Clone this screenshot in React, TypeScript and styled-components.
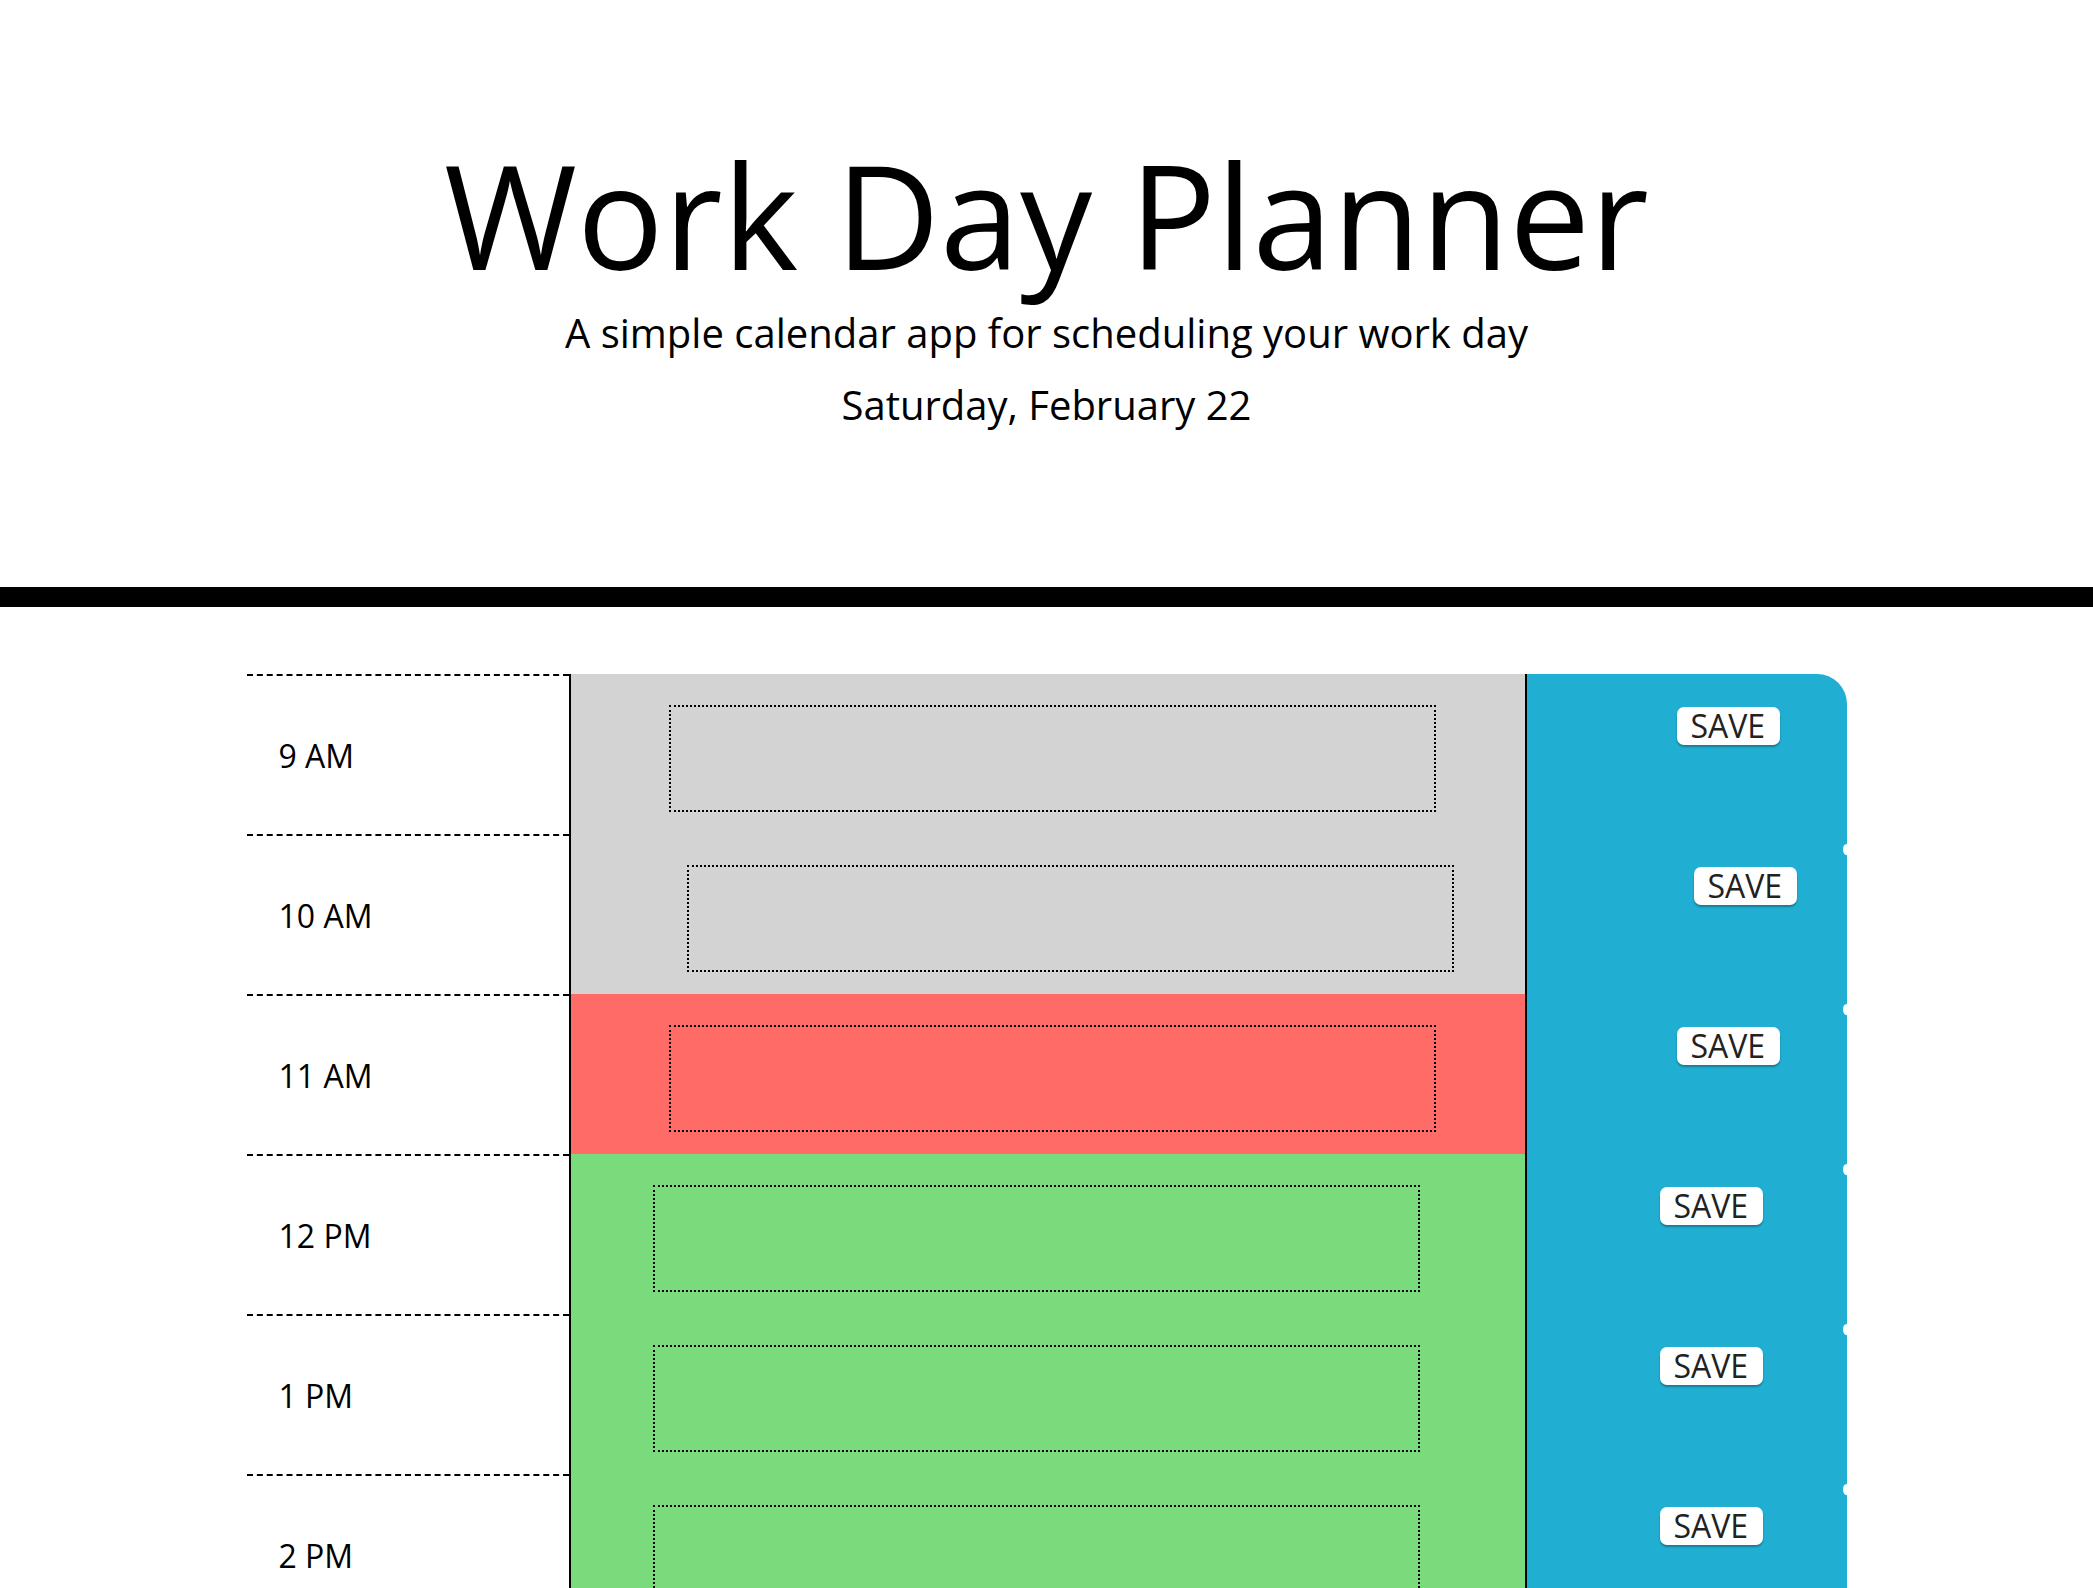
import React from "react";
import styled, { createGlobalStyle } from "styled-components";

type Tense = "past" | "present" | "future";

interface HourBlock {
  label: string;
  tense: Tense;
  areaShift: number;
  saveShift: number;
}

const HOURS: HourBlock[] = [
  { label: "9 AM", tense: "past", areaShift: 0, saveShift: 0 },
  { label: "10 AM", tense: "past", areaShift: 18, saveShift: 17 },
  { label: "11 AM", tense: "present", areaShift: 0, saveShift: 0 },
  { label: "12 PM", tense: "future", areaShift: -16, saveShift: -17 },
  { label: "1 PM", tense: "future", areaShift: -16, saveShift: -17 },
  { label: "2 PM", tense: "future", areaShift: -16, saveShift: -17 },
  { label: "3 PM", tense: "future", areaShift: -16, saveShift: -17 },
  { label: "4 PM", tense: "future", areaShift: -16, saveShift: -17 },
  { label: "5 PM", tense: "future", areaShift: -16, saveShift: -17 },
];

const TENSE_COLORS: Record<Tense, string> = {
  past: "#d3d3d3",
  present: "#ff6b66",
  future: "#7adb7c",
};

const GlobalStyle = createGlobalStyle`
  body {
    margin: 0;
    background: #ffffff;
    color: #000000;
    font-family: "Open Sans", "Noto Sans", sans-serif;
    line-height: 1;
  }
`;

const Header = styled.header`
  text-align: center;
  padding: 128px 64px 0;
  height: 459px;
  border-bottom: 20px solid #000000;
  margin-bottom: 67px;
`;

const Title = styled.h1`
  margin: 0 0 12px;
  font-size: 144px;
  font-weight: 400;
  line-height: 1.2;
`;

const Lead = styled.p`
  margin: 0 0 32px;
  font-size: 40px;
  line-height: 1;
`;

const Schedule = styled.main`
  width: 1600px;
  margin: 0 auto;
`;

const Row = styled.section`
  display: grid;
  grid-template-columns: 322px 958px 320px;
  height: 160px;
`;

const HourCell = styled.div`
  border-top: 2px dashed #000000;
  padding: 64px 0 0 32px;
  font-size: 32px;
`;

const Description = styled.div<{ $tense: Tense }>`
  background: ${(p) => TENSE_COLORS[p.$tense]};
  border-left: 2px solid #000000;
  border-right: 2px solid #000000;
  padding-top: 31px;
`;

const NoteArea = styled.textarea<{ $shift: number }>`
  display: block;
  box-sizing: border-box;
  width: 767px;
  height: 107px;
  margin-left: ${(p) => 98 + p.$shift}px;
  padding: 10px;
  background: transparent;
  border: 2px dotted #000000;
  resize: none;
  font-family: inherit;
  font-size: 32px;
  color: #000000;
  outline: none;
`;

const SaveCell = styled.div<{ $first: boolean }>`
  position: relative;
  background: #20afd3;
  border-top-right-radius: ${(p) => (p.$first ? "30px" : "0")};
  padding-top: 33px;

  &::before {
    content: "";
    display: ${(p) => (p.$first ? "none" : "block")};
    position: absolute;
    right: -3px;
    top: 10px;
    width: 7px;
    height: 11px;
    border-radius: 50%;
    background: #ffffff;
  }
`;

const SaveButton = styled.button<{ $shift: number }>`
  display: block;
  margin-left: ${(p) => 150 + p.$shift}px;
  height: 38px;
  padding: 0 15px 0 14px;
  border: none;
  border-radius: 7px;
  background: #ffffff;
  box-shadow: 0 2px 2px rgba(0, 0, 0, 0.3);
  font-family: inherit;
  font-size: 32px;
  line-height: 38px;
  color: #222222;
  cursor: pointer;
`;

const App = (): React.JSX.Element => {
  return (
    <>
      <GlobalStyle />
      <Header>
        <Title>Work Day Planner</Title>
        <Lead>A simple calendar app for scheduling your work day</Lead>
        <Lead>Saturday, February 22</Lead>
      </Header>
      <Schedule>
        {HOURS.map((hour, index) => (
          <Row key={hour.label}>
            <HourCell>{hour.label}</HourCell>
            <Description $tense={hour.tense}>
              <NoteArea $shift={hour.areaShift} />
            </Description>
            <SaveCell $first={index === 0}>
              <SaveButton $shift={hour.saveShift}>SAVE</SaveButton>
            </SaveCell>
          </Row>
        ))}
      </Schedule>
    </>
  );
};

export default App;
